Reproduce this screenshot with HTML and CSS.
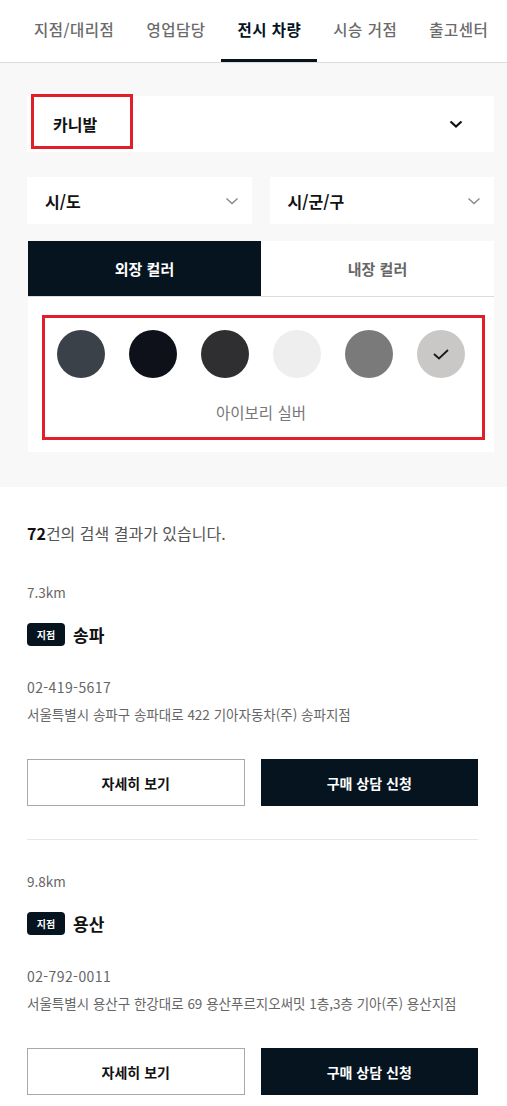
FILE: index.html
```html
<!DOCTYPE html>
<html lang="ko">
<head>
<meta charset="utf-8">
<title>전시 차량</title>
<link rel="stylesheet" href="styles.css">
</head>
<body>
<nav class="tabs">
  <a class="tab">지점/대리점</a>
  <a class="tab">영업담당</a>
  <a class="tab active">전시 차량</a>
  <a class="tab">시승 거점</a>
  <a class="tab">출고센터</a>
</nav>

<section class="filters">
  <div class="select select-car">
    <span class="select-label">카니발</span>
    <svg class="chev chev-bold" width="14" height="8" viewBox="0 0 14 8"><path d="M1.5 1.5 L7 6.5 L12.5 1.5" fill="none" stroke="#111" stroke-width="2.2"/></svg>
    <span class="mark mark-car"></span>
  </div>
  <div class="select-row">
    <div class="select select-sm">
      <span class="select-label">시/도</span>
      <svg class="chev" width="14" height="8" viewBox="0 0 14 8"><path d="M1.5 1.5 L7 6.5 L12.5 1.5" fill="none" stroke="#888" stroke-width="1.4"/></svg>
    </div>
    <div class="select select-sm">
      <span class="select-label">시/군/구</span>
      <svg class="chev" width="14" height="8" viewBox="0 0 14 8"><path d="M1.5 1.5 L7 6.5 L12.5 1.5" fill="none" stroke="#888" stroke-width="1.4"/></svg>
    </div>
  </div>
  <div class="color-tabs">
    <div class="ctab active">외장 컬러</div>
    <div class="ctab">내장 컬러</div>
  </div>
  <div class="color-panel">
    <div class="swatches">
      <span class="swatch" style="background:#3a4148"></span>
      <span class="swatch" style="background:#0e111a"></span>
      <span class="swatch" style="background:#2f2f31"></span>
      <span class="swatch" style="background:#eeeeee"></span>
      <span class="swatch" style="background:#7a7a7a"></span>
      <span class="swatch selected" style="background:#c9c8c6">
        <svg width="18" height="14" viewBox="0 0 18 14"><path d="M2 7 L7 11.5 L16 3" fill="none" stroke="#1a1a1a" stroke-width="1.8"/></svg>
      </span>
    </div>
    <div class="color-name">아이보리 실버</div>
    <span class="mark mark-colors"></span>
  </div>
</section>

<section class="results">
  <p class="count"><strong>72</strong>건의 검색 결과가 있습니다.</p>

  <article class="dealer">
    <div class="distance">7.3km</div>
    <div class="name-row"><span class="badge">지점</span><span class="name">송파</span></div>
    <div class="phone">02-419-5617</div>
    <div class="address">서울특별시 송파구 송파대로 422 기아자동차(주) 송파지점</div>
    <div class="actions">
      <button class="btn btn-line">자세히 보기</button>
      <button class="btn btn-dark">구매 상담 신청</button>
    </div>
  </article>

  <article class="dealer">
    <div class="distance">9.8km</div>
    <div class="name-row"><span class="badge">지점</span><span class="name">용산</span></div>
    <div class="phone">02-792-0011</div>
    <div class="address">서울특별시 용산구 한강대로 69 용산푸르지오써밋 1층,3층 기아(주) 용산지점</div>
    <div class="actions">
      <button class="btn btn-line">자세히 보기</button>
      <button class="btn btn-dark">구매 상담 신청</button>
    </div>
  </article>
</section>
</body>
</html>
```

FILE: styles.css
```css
* { box-sizing: border-box; }
html, body {
  margin: 0;
  padding: 0;
  background: #fff;
  font-family: "Noto Sans CJK KR", "Noto Sans", sans-serif;
  color: #111;
}

.tabs {
  display: flex;
  height: 63px;
  padding-left: 18px;
  border-bottom: 1px solid #dcdcdc;
  white-space: nowrap;
  overflow: hidden;
}
.tab {
  display: flex;
  align-items: center;
  height: 62px;
  padding: 0 16px 2px;
  font-size: 15.5px;
  font-weight: 500;
  color: #6b6b6b;
  border-bottom: 3px solid transparent;
  letter-spacing: 0.5px;
}
.tab.active {
  color: #05141f;
  font-weight: 700;
  border-bottom-color: #05141f;
}

.filters {
  background: #f8f8f8;
  padding: 33px 13px 35px 27px;
}
.select {
  position: relative;
  display: flex;
  align-items: center;
  justify-content: space-between;
  background: #fff;
}
.select-car {
  height: 56px;
  padding: 0 31px 0 26px;
}
.select-label {
  font-size: 16px;
  font-weight: 700;
  color: #111;
}
.select-row {
  display: flex;
  gap: 18px;
  margin-top: 25px;
}
.select-sm {
  flex: 1;
  height: 47px;
  padding: 0 13px 0 18px;
}
.chev { display: block; }

.mark {
  position: absolute;
  border: 3px solid #e31e2b;
  pointer-events: none;
}
.mark-car {
  left: 4px;
  top: -2px;
  width: 102px;
  height: 55px;
}

.color-tabs {
  display: flex;
  margin-top: 17px;
  margin-left: 1px;
  border-bottom: 1px solid #dcdcdc;
}
.ctab {
  flex: 1;
  height: 55px;
  display: flex;
  align-items: center;
  justify-content: center;
  font-size: 15px;
  font-weight: 700;
  color: #666;
  background: #fff;
}
.ctab.active {
  background: #05141f;
  color: #fff;
}

.color-panel {
  position: relative;
  background: #fff;
  margin-left: 1px;
  height: 155px;
  padding: 33px 29px 0;
}
.swatches {
  display: flex;
  justify-content: space-between;
}
.swatch {
  width: 48px;
  height: 48px;
  border-radius: 50%;
  display: flex;
  align-items: center;
  justify-content: center;
}
.color-name {
  margin-top: 23px;
  text-align: center;
  font-size: 15.5px;
  line-height: 22px;
  color: #777;
}
.mark-colors {
  left: 14px;
  top: 18px;
  width: 443px;
  height: 125px;
}

.results {
  padding: 0 29px 0 27px;
}
.count {
  margin: 35px 0 0;
  font-size: 16px;
  line-height: 22px;
  color: #555;
}
.count strong {
  color: #111;
  font-weight: 700;
}
.dealer {
  padding-top: 38px;
  padding-bottom: 33px;
  border-bottom: 1px solid #e6e6e6;
}
.dealer + .dealer {
  padding-top: 31px;
}
.dealer:last-child { border-bottom: none; }
.distance {
  font-size: 13.5px;
  line-height: 20px;
  color: #666;
}
.name-row {
  display: flex;
  align-items: center;
  margin-top: 21px;
  height: 23px;
}
.badge {
  display: inline-flex;
  align-items: center;
  justify-content: center;
  width: 38px;
  height: 23px;
  border-radius: 4px;
  background: #05141f;
  color: #fff;
  font-size: 10px;
  font-weight: 700;
}
.name {
  margin-left: 8px;
  font-size: 17px;
  font-weight: 700;
  color: #111;
}
.phone {
  margin-top: 31px;
  font-size: 14px;
  letter-spacing: 0.4px;
  line-height: 20px;
  color: #666;
}
.address {
  margin-top: 7px;
  font-size: 13.5px;
  line-height: 20px;
  color: #666;
  white-space: nowrap;
}
.actions {
  display: flex;
  gap: 16px;
  margin-top: 35px;
}
.btn {
  flex: 1;
  height: 47px;
  font-family: inherit;
  font-size: 14px;
  font-weight: 700;
  border-radius: 0;
  padding: 0;
}
.btn-line {
  background: #fff;
  border: 1px solid #a8a8a8;
  color: #111;
}
.btn-dark {
  background: #05141f;
  border: 1px solid #05141f;
  color: #fff;
}
```
